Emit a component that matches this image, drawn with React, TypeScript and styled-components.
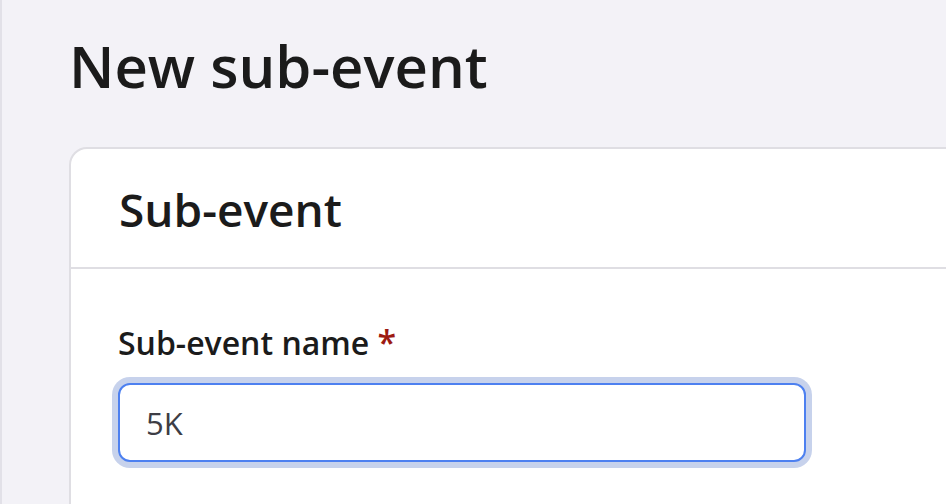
import React from "react";
import styled, { createGlobalStyle } from "styled-components";

const Global = createGlobalStyle`
  html, body { margin: 0; padding: 0; }
  body {
    background: #f3f2f7;
    font-family: "Open Sans", "Noto Sans", sans-serif;
    color: #1b1b1b;
    overflow: hidden;
  }
`;

const Page = styled.div`
  width: 946px;
  height: 504px;
  overflow: hidden;
  border-left: 2px solid #e2e1e8;
  box-sizing: border-box;
  padding: 32px 0 0 67px;
`;

const Title = styled.h1`
  margin: 0 0 47px;
  font-size: 58px;
  line-height: 68px;
  font-weight: 600;
`;

const Card = styled.section`
  width: 1000px;
  background: #ffffff;
  border: 2px solid #dfdee3;
  border-radius: 18px;
`;

const CardHeader = styled.header`
  padding: 34px 48px 32px;
  border-bottom: 2px solid #dfdee3;
`;

const CardTitle = styled.h2`
  margin: 0;
  font-size: 46px;
  line-height: 52px;
  font-weight: 600;
`;

const CardBody = styled.div`
  padding: 54px 47px 80px;
`;

const Label = styled.label`
  display: block;
  font-size: 32px;
  line-height: 38px;
  font-weight: 600;
  margin-bottom: 21px;
`;

const Required = styled.span`
  color: #9d1a12;
  font-size: 34px;
`;

const Input = styled.input`
  display: block;
  box-sizing: border-box;
  width: 688px;
  height: 79px;
  padding: 0 26px;
  border: 2px solid #4d80f0;
  border-radius: 12px;
  box-shadow: 0 0 0 6px #c7d2ec;
  font-family: "Open Sans", "Noto Sans", sans-serif;
  font-size: 31px;
  color: #3d3d45;
  outline: none;
  background: #fff;
`;

export default function App() {
  return (
    <>
      <Global />
      <Page>
        <Title>New sub-event</Title>
        <Card>
          <CardHeader>
            <CardTitle>Sub-event</CardTitle>
          </CardHeader>
          <CardBody>
            <Label htmlFor="name">
              Sub-event name <Required>*</Required>
            </Label>
            <Input id="name" defaultValue="5K" readOnly />
          </CardBody>
        </Card>
      </Page>
    </>
  );
}
